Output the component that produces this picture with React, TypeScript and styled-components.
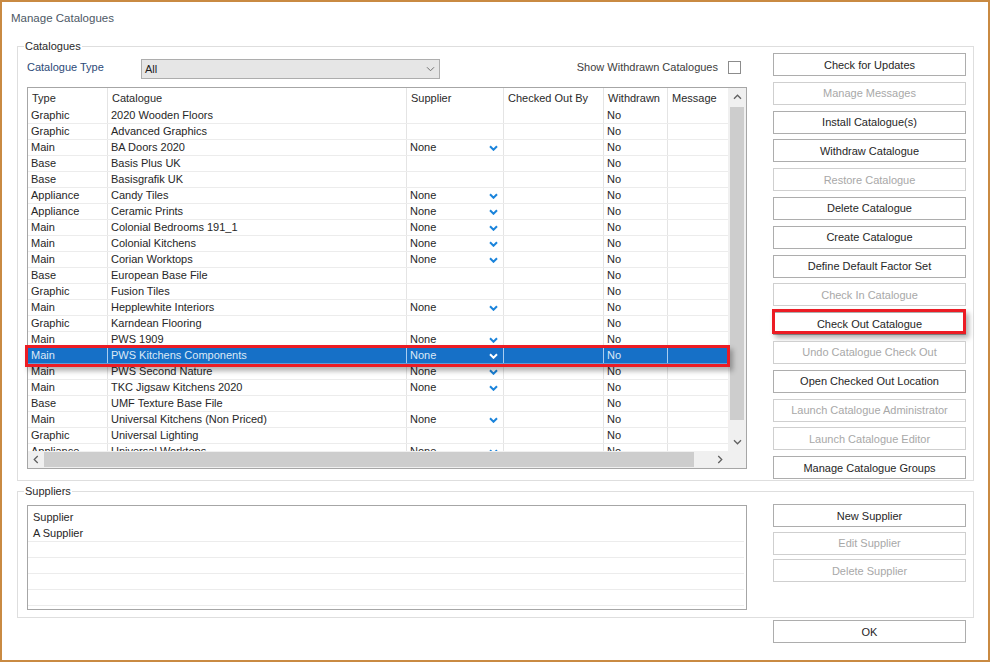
import React from 'react'
import styled, { createGlobalStyle, css } from 'styled-components'

type Row = {
  type: string
  name: string
  supplier?: boolean
}

const ROWS: Row[] = [
  { type: 'Graphic', name: '2020 Wooden Floors' },
  { type: 'Graphic', name: 'Advanced Graphics' },
  { type: 'Main', name: 'BA Doors 2020', supplier: true },
  { type: 'Base', name: 'Basis Plus UK' },
  { type: 'Base', name: 'Basisgrafik UK' },
  { type: 'Appliance', name: 'Candy Tiles', supplier: true },
  { type: 'Appliance', name: 'Ceramic Prints', supplier: true },
  { type: 'Main', name: 'Colonial Bedrooms 191_1', supplier: true },
  { type: 'Main', name: 'Colonial Kitchens', supplier: true },
  { type: 'Main', name: 'Corian Worktops', supplier: true },
  { type: 'Base', name: 'European Base File' },
  { type: 'Graphic', name: 'Fusion Tiles' },
  { type: 'Main', name: 'Hepplewhite Interiors', supplier: true },
  { type: 'Graphic', name: 'Karndean Flooring' },
  { type: 'Main', name: 'PWS 1909', supplier: true },
  { type: 'Main', name: 'PWS Kitchens Components', supplier: true },
  { type: 'Main', name: 'PWS Second Nature', supplier: true },
  { type: 'Main', name: 'TKC Jigsaw Kitchens 2020', supplier: true },
  { type: 'Base', name: 'UMF Texture Base File' },
  { type: 'Main', name: 'Universal Kitchens (Non Priced)', supplier: true },
  { type: 'Graphic', name: 'Universal Lighting' },
  { type: 'Appliance', name: 'Universal Worktops', supplier: true },
]

const SELECTED = 15

const COLUMNS = [
  { title: 'Type', width: 80 },
  { title: 'Catalogue', width: 299 },
  { title: 'Supplier', width: 97 },
  { title: 'Checked Out By', width: 100 },
  { title: 'Withdrawn', width: 64 },
  { title: 'Message', width: 60 },
]

const ACTIONS: { label: string; disabled?: boolean; highlight?: boolean }[] = [
  { label: 'Check for Updates' },
  { label: 'Manage Messages', disabled: true },
  { label: 'Install Catalogue(s)' },
  { label: 'Withdraw Catalogue' },
  { label: 'Restore Catalogue', disabled: true },
  { label: 'Delete Catalogue' },
  { label: 'Create Catalogue' },
  { label: 'Define Default Factor Set' },
  { label: 'Check In Catalogue', disabled: true },
  { label: 'Check Out Catalogue', highlight: true },
  { label: 'Undo Catalogue Check Out', disabled: true },
  { label: 'Open Checked Out Location' },
  { label: 'Launch Catalogue Administrator', disabled: true },
  { label: 'Launch Catalogue Editor', disabled: true },
  { label: 'Manage Catalogue Groups' },
]

const GlobalStyle = createGlobalStyle`
  body {
    margin: 0;
    background: #ffffff;
    font-family: 'Liberation Sans', Arial, sans-serif;
    font-size: 11px;
    color: #262626;
  }
`

const Window = styled.div`
  box-sizing: border-box;
  width: 990px;
  height: 662px;
  border: 2px solid #c98a42;
  background: #ffffff;
  padding: 8px 15px 0 9px;
  overflow: hidden;
`

const Title = styled.div`
  height: 16px;
  line-height: 16px;
  font-size: 11.5px;
  color: #4d5865;
`

const Group = styled.fieldset<{ $top: number; $height: number }>`
  box-sizing: border-box;
  margin: ${props => props.$top}px 0 0 6px;
  width: 957px;
  height: ${props => props.$height}px;
  padding: 0 7px 0 7px;
  border: 1px solid #dedede;
  min-width: 0;
`

const Legend = styled.legend`
  padding: 0 1px;
  margin-left: -1px;
  line-height: 14px;
  font-size: 11px;
  color: #2a2a2a;
`

const GroupBody = styled.div`
  display: flex;
  align-items: flex-start;
`

const LeftColumn = styled.div`
  display: flex;
  flex-direction: column;
  margin-left: 2px;
  width: 720px;
`

const ButtonColumn = styled.div<{ $top: number; $gap: number }>`
  display: flex;
  flex-direction: column;
  gap: ${props => props.$gap}px;
  margin: ${props => props.$top}px 0 0 auto;
  width: 193px;
`

const TopBar = styled.div`
  display: flex;
  align-items: center;
  height: 20px;
  margin-top: 6px;
`

const FieldLabel = styled.span`
  width: 114px;
  color: #2c4a78;
  font-size: 11px;
  margin-top: -5px;
`

const Combo = styled.div`
  box-sizing: border-box;
  display: flex;
  align-items: center;
  justify-content: space-between;
  width: 299px;
  height: 20px;
  padding: 0 4px 0 3px;
  background: #e6e6e6;
  border: 1px solid #adadad;
  color: #1e1e1e;
`

const CheckText = styled.span`
  margin-left: auto;
  color: #3d3d3d;
  margin-top: -5px;
`

const CheckBox = styled.span`
  box-sizing: border-box;
  width: 13px;
  height: 13px;
  margin: -4px 6px 0 10px;
  border: 1px solid #8c8c8c;
  background: #ffffff;
`

const GridFrame = styled.div`
  position: relative;
  box-sizing: border-box;
  margin-top: 8px;
  height: 382px;
  border: 1px solid #a6a6a6;
  display: grid;
  grid-template-columns: 700px 18px;
  grid-template-rows: 363px 17px;
`

const Table = styled.div`
  overflow: hidden;
`

const HeaderRow = styled.div`
  display: flex;
  height: 20px;
`

const DataRow = styled.div<{ $selected?: boolean }>`
  display: flex;
  height: 16px;
  box-sizing: border-box;
  border-bottom: 1px solid ${props => (props.$selected ? '#5d9ddb' : '#ececec')};
  background: ${props => (props.$selected ? '#1670c7' : 'transparent')};
  color: ${props => (props.$selected ? '#dde9f6' : '#262626')};
`

const Cell = styled.div<{ $width: number; $selected?: boolean; $header?: boolean }>`
  box-sizing: border-box;
  flex: none;
  width: ${props => props.$width}px;
  display: flex;
  align-items: center;
  justify-content: space-between;
  padding: 0 5px 0 ${props => (props.$header ? 4 : 3)}px;
  border-right: 1px solid ${props => (props.$selected ? '#a9cdf0' : '#e4e4e4')};
  white-space: nowrap;
  overflow: hidden;
  line-height: 15px;
  ${props =>
    props.$header &&
    css`
      align-items: flex-start;
      padding-top: 3px;
      color: #2a2a2a;
    `}
  &:last-child {
    border-right: none;
  }
`

const VScroll = styled.div`
  grid-row: 1;
  grid-column: 2;
  display: flex;
  flex-direction: column;
  background: #f0f0f0;
`

const ScrollArrow = styled.div<{ $size: number }>`
  flex: none;
  display: flex;
  align-items: center;
  justify-content: center;
  width: ${props => props.$size}px;
  height: ${props => props.$size}px;
`

const VTrack = styled.div`
  flex: 1;
  padding: 1px 2px 0;
`

const VThumb = styled.div`
  height: 313px;
  background: #cdcdcd;
`

const HScroll = styled.div`
  grid-row: 2;
  grid-column: 1;
  display: flex;
  align-items: stretch;
  background: #f0f0f0;
`

const HTrack = styled.div`
  flex: 1;
  padding: 1px 0 0;
`

const HThumb = styled.div`
  width: 650px;
  height: 15px;
  background: #cdcdcd;
`

const Corner = styled.div`
  grid-row: 2;
  grid-column: 2;
  background: #f0f0f0;
`

const Highlight = styled.div`
  position: absolute;
  left: -3px;
  top: 257px;
  width: 705px;
  height: 22px;
  box-sizing: border-box;
  border: 3px solid #ec1c24;
  box-shadow: 3px 4px 5px rgba(0, 0, 0, 0.3);
  pointer-events: none;
`

const ActionButton = styled.div<{ $disabled?: boolean; $highlight?: boolean }>`
  position: relative;
  box-sizing: border-box;
  height: 23px;
  display: flex;
  align-items: center;
  justify-content: center;
  background: #ffffff;
  border: 1px solid ${props => (props.$disabled ? '#cfcfcf' : '#adadad')};
  color: ${props => (props.$disabled ? '#a8a8a8' : '#262626')};
  font-size: 11px;
  white-space: nowrap;
  ${props =>
    props.$highlight &&
    css`
      &::after {
        content: '';
        position: absolute;
        left: -2px;
        top: -4px;
        right: -1px;
        bottom: 0;
        border: 3px solid #ec1c24;
        box-shadow: 3px 4px 5px rgba(0, 0, 0, 0.3);
      }
    `}
`

const SupplierList = styled.div`
  box-sizing: border-box;
  margin-top: 7px;
  height: 105px;
  border: 1px solid #a6a6a6;
`

const ListHeader = styled.div`
  height: 20px;
  padding: 5px 0 0 5px;
  box-sizing: border-box;
  line-height: 13px;
  color: #2a2a2a;
`

const ListRow = styled.div`
  box-sizing: border-box;
  height: 16px;
  margin-right: 2px;
  padding-left: 5px;
  line-height: 15px;
  border-bottom: 1px solid #ececec;
`

const Footer = styled.div`
  display: flex;
  justify-content: flex-end;
  margin-top: 2px;
  padding-right: 8px;
  margin-left: 6px;
  width: 957px;
  box-sizing: border-box;

  & > div {
    width: 193px;
  }
`

type ChevronProps = {
  dir: 'up' | 'down' | 'left' | 'right'
  color: string
  stroke?: number
}

function Chevron({ dir, color, stroke = 1.3 }: ChevronProps) {
  const vertical = dir === 'up' || dir === 'down'
  const points = {
    up: '1,4.5 4.5,1 8,4.5',
    down: '1,1 4.5,4.5 8,1',
    left: '4.5,1 1,4.5 4.5,8',
    right: '1,1 4.5,4.5 1,8',
  }[dir]
  return (
    <svg
      width={vertical ? 9 : 6}
      height={vertical ? 6 : 9}
      viewBox={vertical ? '0 0 9 5.5' : '0 0 5.5 9'}
    >
      <polyline points={points} fill="none" stroke={color} strokeWidth={stroke} />
    </svg>
  )
}

function CatalogueGrid() {
  return (
    <GridFrame>
      <Table>
        <HeaderRow>
          {COLUMNS.map(col => (
            <Cell key={col.title} $width={col.width} $header>
              {col.title}
            </Cell>
          ))}
        </HeaderRow>
        {ROWS.map((row, i) => {
          const selected = i === SELECTED
          return (
            <DataRow key={row.name} $selected={selected}>
              <Cell $width={80} $selected={selected}>
                {row.type}
              </Cell>
              <Cell $width={299} $selected={selected}>
                {row.name}
              </Cell>
              <Cell $width={97} $selected={selected}>
                {row.supplier && 'None'}
                {row.supplier && (
                  <Chevron
                    dir="down"
                    color={selected ? '#ffffff' : '#1b84db'}
                    stroke={2}
                  />
                )}
              </Cell>
              <Cell $width={100} $selected={selected} />
              <Cell $width={64} $selected={selected}>
                No
              </Cell>
              <Cell $width={60} $selected={selected} />
            </DataRow>
          )
        })}
      </Table>
      <VScroll>
        <ScrollArrow $size={18}>
          <Chevron dir="up" color="#606060" />
        </ScrollArrow>
        <VTrack>
          <VThumb />
        </VTrack>
        <ScrollArrow $size={18}>
          <Chevron dir="down" color="#606060" />
        </ScrollArrow>
      </VScroll>
      <HScroll>
        <ScrollArrow $size={16}>
          <Chevron dir="left" color="#606060" />
        </ScrollArrow>
        <HTrack>
          <HThumb />
        </HTrack>
        <ScrollArrow $size={17}>
          <Chevron dir="right" color="#606060" />
        </ScrollArrow>
      </HScroll>
      <Corner />
      <Highlight />
    </GridFrame>
  )
}

export default function App() {
  return (
    <>
      <GlobalStyle />
      <Window>
        <Title>Manage Catalogues</Title>
        <Group $top={13} $height={442}>
          <Legend>Catalogues</Legend>
          <GroupBody>
            <LeftColumn>
              <TopBar>
                <FieldLabel>Catalogue Type</FieldLabel>
                <Combo>
                  All
                  <Chevron dir="down" color="#707070" stroke={1} />
                </Combo>
                <CheckText>Show Withdrawn Catalogues</CheckText>
                <CheckBox />
              </TopBar>
              <CatalogueGrid />
            </LeftColumn>
            <ButtonColumn $top={0} $gap={5.8}>
              {ACTIONS.map(action => (
                <ActionButton
                  key={action.label}
                  $disabled={action.disabled}
                  $highlight={action.highlight}
                >
                  {action.label}
                </ActionButton>
              ))}
            </ButtonColumn>
          </GroupBody>
        </Group>
        <Group $top={3} $height={134}>
          <Legend>Suppliers</Legend>
          <GroupBody>
            <LeftColumn>
              <SupplierList>
                <ListHeader>Supplier</ListHeader>
                <ListRow>A Supplier</ListRow>
                <ListRow />
                <ListRow />
                <ListRow />
                <ListRow />
              </SupplierList>
            </LeftColumn>
            <ButtonColumn $top={6} $gap={4.5}>
              <ActionButton>New Supplier</ActionButton>
              <ActionButton $disabled>Edit Supplier</ActionButton>
              <ActionButton $disabled>Delete Supplier</ActionButton>
            </ButtonColumn>
          </GroupBody>
        </Group>
        <Footer>
          <ActionButton>OK</ActionButton>
        </Footer>
      </Window>
    </>
  )
}
